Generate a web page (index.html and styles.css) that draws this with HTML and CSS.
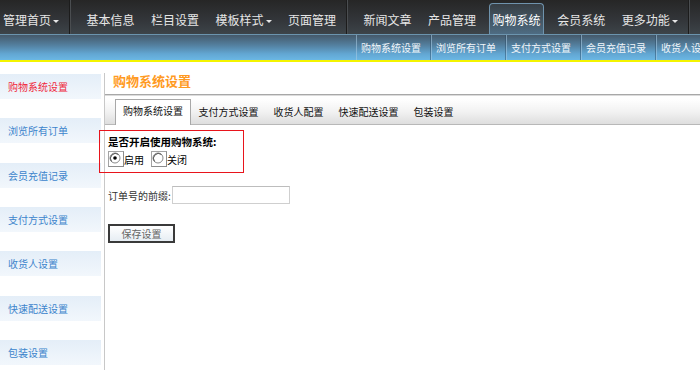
FILE: index.html
```html
<!DOCTYPE html>
<html lang="zh-CN">
<head>
<meta charset="utf-8">
<title>购物系统设置</title>
<link rel="stylesheet" href="styles.css">
</head>
<body>
<header class="header">
  <nav class="topnav">
    <a class="nav-item first">管理首页<i class="caret"></i></a>
    <span class="sep"></span>
    <a class="nav-item">基本信息</a>
    <a class="nav-item">栏目设置</a>
    <a class="nav-item">模板样式<i class="caret"></i></a>
    <a class="nav-item">页面管理</a>
    <span class="sep"></span>
    <a class="nav-item">新闻文章</a>
    <a class="nav-item">产品管理</a>
    <a class="nav-item active">购物系统</a>
    <a class="nav-item">会员系统</a>
    <a class="nav-item">更多功能<i class="caret"></i></a>
    <span class="sep"></span>
  </nav>
  <nav class="subnav">
    <a class="sub-item">购物系统设置</a>
    <a class="sub-item">浏览所有订单</a>
    <a class="sub-item">支付方式设置</a>
    <a class="sub-item">会员充值记录</a>
    <a class="sub-item">收货人设置</a>
  </nav>
</header>

<div class="layout">
  <aside class="sidebar">
    <a class="side-item current">购物系统设置</a>
    <a class="side-item">浏览所有订单</a>
    <a class="side-item">会员充值记录</a>
    <a class="side-item">支付方式设置</a>
    <a class="side-item">收货人设置</a>
    <a class="side-item">快速配送设置</a>
    <a class="side-item">包装设置</a>
  </aside>

  <main class="main">
    <h1 class="title">购物系统设置</h1>
    <div class="tabs">
      <span class="tab active">购物系统设置</span>
      <span class="tab">支付方式设置</span>
      <span class="tab">收货人配置</span>
      <span class="tab">快速配送设置</span>
      <span class="tab">包装设置</span>
    </div>

    <form class="form">
      <div class="highlight">
        <div class="field-label">是否开启使用购物系统:</div>
        <div class="radios">
          <label class="radio">
            <span class="radio-box">
              <svg width="12" height="12" viewBox="0 0 12 12"><circle cx="6" cy="6" r="5" fill="#fff" stroke="#8a8a8a"/><path d="M2.5 9.5A5 5 0 0 1 9.5 2.5" fill="none" stroke="#555"/><circle cx="6" cy="6" r="1.8" fill="#000"/></svg>
            </span>启用
          </label>
          <label class="radio">
            <span class="radio-box">
              <svg width="12" height="12" viewBox="0 0 12 12"><circle cx="6" cy="6" r="5" fill="#fff" stroke="#8a8a8a"/><path d="M2.5 9.5A5 5 0 0 1 9.5 2.5" fill="none" stroke="#555"/></svg>
            </span>关闭
          </label>
        </div>
      </div>

      <div class="prefix-row">
        <span class="prefix-label">订单号的前缀:</span>
        <span class="text-input"></span>
      </div>

      <button type="button" class="save-btn">保存设置</button>
    </form>
  </main>
</div>
</body>
</html>
```

FILE: styles.css
```css
* { box-sizing: border-box; }

html, body {
  margin: 0;
  padding: 0;
  background: #fff;
}

body {
  font-family: "Noto Sans CJK SC", "Noto Sans", "DejaVu Sans", sans-serif;
  font-size: 10px;
  color: #000;
  overflow: hidden;
}

a { text-decoration: none; }

/* ---------- header ---------- */
.header {
  border-bottom: 2px solid #f4f400;
}

.topnav {
  height: 34px;
  display: flex;
  align-items: flex-end;
  background: linear-gradient(#262626, #33363a 60%, #3d4449);
  white-space: nowrap;
}

.nav-item {
  height: 31px;
  line-height: 27px;
  margin: 0 5px;
  padding: 0 2.25px;
  border: 1px solid transparent;
  border-bottom: 0;
  color: #e6e6e6;
  font-size: 12px;
  display: flex;
  align-items: center;
}

.nav-item.first {
  margin-left: 0;
  padding-left: 2px;
}

.nav-item.active {
  border-color: #6f93ad;
  border-radius: 4px 4px 0 0;
  background: linear-gradient(#383f45, #475d6e 70%, #4e6c83);
  color: #fff;
}

.caret {
  display: inline-block;
  width: 0;
  height: 0;
  margin-left: 2px;
  margin-top: 4px;
  border-left: 3px solid transparent;
  border-right: 3px solid transparent;
  border-top: 3px solid #e6e6e6;
}

.sep {
  align-self: stretch;
  width: 2px;
  margin: 0 7px 0 2px;
  border-left: 1px solid #1c1c1c;
  border-right: 1px solid #4a4d50;
}

.subnav {
  height: 26px;
  display: flex;
  padding-left: 356px;
  border-top: 1px solid #6b94ae;
  background: linear-gradient(#45596a, #537f9e 40%, #62a6d2 75%, #6bb7e4);
  white-space: nowrap;
  overflow: hidden;
}

.sub-item {
  flex: none;
  height: 25px;
  line-height: 25px;
  padding: 0 9px 0 4px;
  border-left: 1px solid rgba(170, 205, 230, 0.55);
  border-right: 1px solid rgba(40, 70, 95, 0.45);
  color: #f2f6fa;
  font-size: 10px;
}

/* ---------- layout ---------- */
.layout {
  display: flex;
  gap: 3px;
  padding-top: 11px;
}

.sidebar {
  width: 101px;
  flex: none;
  padding-top: 1px;
  display: flex;
  flex-direction: column;
}

.side-item {
  height: 25px;
  line-height: 25px;
  margin-bottom: 19.33px;
  padding-left: 8px;
  font-size: 10px;
  color: #3c84cc;
  background: linear-gradient(#e4eef8, #f2f7fc);
}

.side-item.current {
  color: #f0283c;
}

.main {
  flex: 1;
  min-height: 300px;
  border-left: 1px solid #c8c8c8;
}

.title {
  margin: 0;
  padding: 0 0 5px 8px;
  line-height: 16px;
  font-size: 13px;
  font-weight: bold;
  color: #ff9a22;
  border-bottom: 1px solid #a8a8a8;
  box-shadow: 0 1px 0 #dcdcdc;
}

.tabs {
  margin-top: 4px;
  height: 26px;
  display: flex;
  align-items: flex-end;
  padding-left: 10px;
  background: linear-gradient(#ffffff, #f2f2f2 50%, #dedede);
  border-bottom: 1px solid #b8b8b8;
}

.tab {
  height: 24px;
  line-height: 22px;
  padding: 0 6.5px;
  font-size: 10px;
  color: #111;
  border: 1px solid transparent;
  border-bottom: 0;
}

.tab.active {
  height: 26px;
  margin-bottom: -1px;
  padding: 0 7px;
  background: #fff;
  border-color: #a8a8a8;
}

/* ---------- form ---------- */
.form {
  padding-left: 3px;
}

.highlight {
  width: 145px;
  margin-top: 5px;
  margin-left: -9px;
  padding: 4px 0 5px 8px;
  border: 1px solid #e8141c;
}

.field-label {
  font-size: 10.5px;
  font-weight: bold;
  line-height: 14px;
}

.radios {
  margin-top: 2px;
  display: flex;
  gap: 7px;
}

.radio {
  display: flex;
  align-items: flex-end;
  height: 16px;
  line-height: 14px;
  font-size: 10px;
}

.radio-box {
  width: 16px;
  height: 16px;
  border: 1px solid #a4a4a4;
  border-right-color: #8c8c8c;
  border-bottom-color: #8c8c8c;
  display: flex;
  align-items: flex-start;
}

.radio-box svg {
  display: block;
}

.prefix-row {
  margin-top: 13px;
  display: flex;
  align-items: center;
  height: 18px;
}

.prefix-label {
  font-size: 10px;
  color: #333;
}

.text-input {
  margin-left: 1px;
  width: 118px;
  height: 18px;
  border: 1px solid #cfcfcf;
  border-top-color: #bdbdbd;
  background: #fff;
}

.save-btn {
  display: block;
  margin-top: 20px;
  width: 67px;
  height: 19px;
  padding: 0;
  border: 2px solid #3a3a3a;
  background: linear-gradient(#ffffff, #e6edf3);
  font-family: inherit;
  font-size: 10px;
  line-height: 15px;
  color: #666;
  text-align: center;
}
```
